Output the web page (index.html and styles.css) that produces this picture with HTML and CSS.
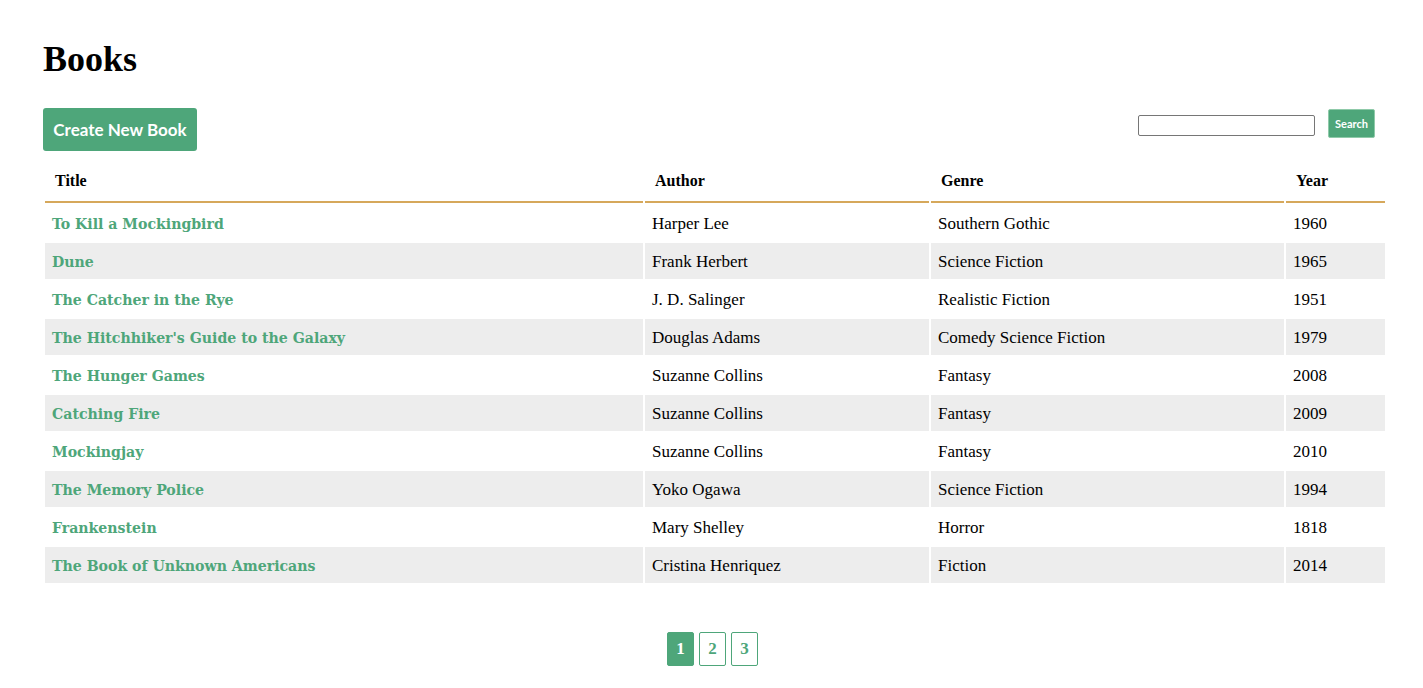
FILE: index.html
```html
<!DOCTYPE html>
<html lang="en">
<head>
<meta charset="utf-8">
<title>Books</title>
<link rel="stylesheet" href="styles.css">
</head>
<body>
<main class="page">
  <h1 class="page-title">Books</h1>
  <div class="toolbar">
    <a class="btn-create" href="#">Create New Book</a>
    <form class="search">
      <input class="search-input" type="text">
      <button class="search-btn" type="button">Search</button>
    </form>
  </div>
  <table class="books">
    <colgroup>
      <col class="c-title"><col class="c-author"><col class="c-genre"><col class="c-year">
    </colgroup>
    <thead>
      <tr><th>Title</th><th>Author</th><th>Genre</th><th>Year</th></tr>
    </thead>
    <tbody>
      <tr><td><a href="#">To Kill a Mockingbird</a></td><td>Harper Lee</td><td>Southern Gothic</td><td>1960</td></tr>
      <tr><td><a href="#">Dune</a></td><td>Frank Herbert</td><td>Science Fiction</td><td>1965</td></tr>
      <tr><td><a href="#">The Catcher in the Rye</a></td><td>J. D. Salinger</td><td>Realistic Fiction</td><td>1951</td></tr>
      <tr><td><a href="#">The Hitchhiker's Guide to the Galaxy</a></td><td>Douglas Adams</td><td>Comedy Science Fiction</td><td>1979</td></tr>
      <tr><td><a href="#">The Hunger Games</a></td><td>Suzanne Collins</td><td>Fantasy</td><td>2008</td></tr>
      <tr><td><a href="#">Catching Fire</a></td><td>Suzanne Collins</td><td>Fantasy</td><td>2009</td></tr>
      <tr><td><a href="#">Mockingjay</a></td><td>Suzanne Collins</td><td>Fantasy</td><td>2010</td></tr>
      <tr><td><a href="#">The Memory Police</a></td><td>Yoko Ogawa</td><td>Science Fiction</td><td>1994</td></tr>
      <tr><td><a href="#">Frankenstein</a></td><td>Mary Shelley</td><td>Horror</td><td>1818</td></tr>
      <tr><td><a href="#">The Book of Unknown Americans</a></td><td>Cristina Henriquez</td><td>Fiction</td><td>2014</td></tr>
    </tbody>
  </table>
  <nav class="pager">
    <a class="page-link active" href="#">1</a>
    <a class="page-link" href="#">2</a>
    <a class="page-link" href="#">3</a>
  </nav>
</main>
</body>
</html>
```

FILE: styles.css
```css
html, body {
  margin: 0;
  padding: 0;
  background: #fff;
}
body {
  font-family: "Liberation Serif", "Times New Roman", serif;
  color: #000;
}
.page {
  padding: 39px 36px 0 43px;
}
.page-title {
  margin: 0;
  font-size: 36px;
  line-height: 40px;
  font-weight: bold;
}
.toolbar {
  margin-top: 29px;
  display: flex;
  justify-content: space-between;
  align-items: flex-start;
}
.btn-create {
  display: inline-flex;
  align-items: center;
  justify-content: center;
  width: 154px;
  height: 43px;
  box-sizing: border-box;
  background: #4ea67a;
  color: #fff;
  text-decoration: none;
  font-family: "Lato", "Open Sans", sans-serif;
  font-weight: 700;
  font-size: 17px;
  border-radius: 3px;
}
.search {
  display: flex;
  align-items: center;
  gap: 13px;
  margin: 1px 12px 0 0;
  height: 29px;
}
.search-input {
  width: 177px;
  height: 21px;
  box-sizing: border-box;
  border: 1px solid #767676;
  border-radius: 2px;
  padding: 0 4px;
  margin: 3px 0 0 0;
}
.search-btn {
  width: 47px;
  height: 29px;
  box-sizing: border-box;
  background: #4ea67a;
  color: #fff;
  border: 1px solid #8fcaa9;
  border-radius: 2px;
  font-family: "Lato", sans-serif;
  font-weight: 700;
  font-size: 11px;
  padding: 0;
  margin-top: -1px;
}
.books {
  margin-top: 8px;
  width: 1344px;
  table-layout: fixed;
  border-collapse: separate;
  border-spacing: 2px;
  font-size: 17px;
}
.c-title { width: 598px; }
.c-author { width: 284px; }
.c-genre { width: 353px; }
.c-year { width: 99px; }
.books th {
  text-align: left;
  font-weight: bold;
  font-size: 16px;
  padding: 10px 10px 10px;
  line-height: 20px;
  border-bottom: 2px solid #d6a85b;
}
.books td {
  padding: 1px 7px 0;
  height: 36px;
  line-height: 20px;
  box-sizing: border-box;
}
.books tbody tr:nth-child(even) td {
  background: #ededed;
}
.books td a {
  color: #4ea67a;
  font-family: "DejaVu Serif Condensed", "DejaVu Serif", serif;
  font-stretch: condensed;
  font-size: 15.7px;
  font-weight: bold;
  text-decoration: none;
}
.pager {
  margin-top: 47px;
  display: flex;
  justify-content: center;
  gap: 5px;
  padding-right: 5px;
}
.page-link {
  width: 27px;
  height: 34px;
  box-sizing: border-box;
  display: flex;
  align-items: center;
  justify-content: center;
  border: 1px solid #4ea67a;
  border-radius: 2px;
  color: #4ea67a;
  font-weight: bold;
  font-size: 17px;
  text-decoration: none;
}
.page-link.active {
  background: #4ea67a;
  color: #fff;
}
```
